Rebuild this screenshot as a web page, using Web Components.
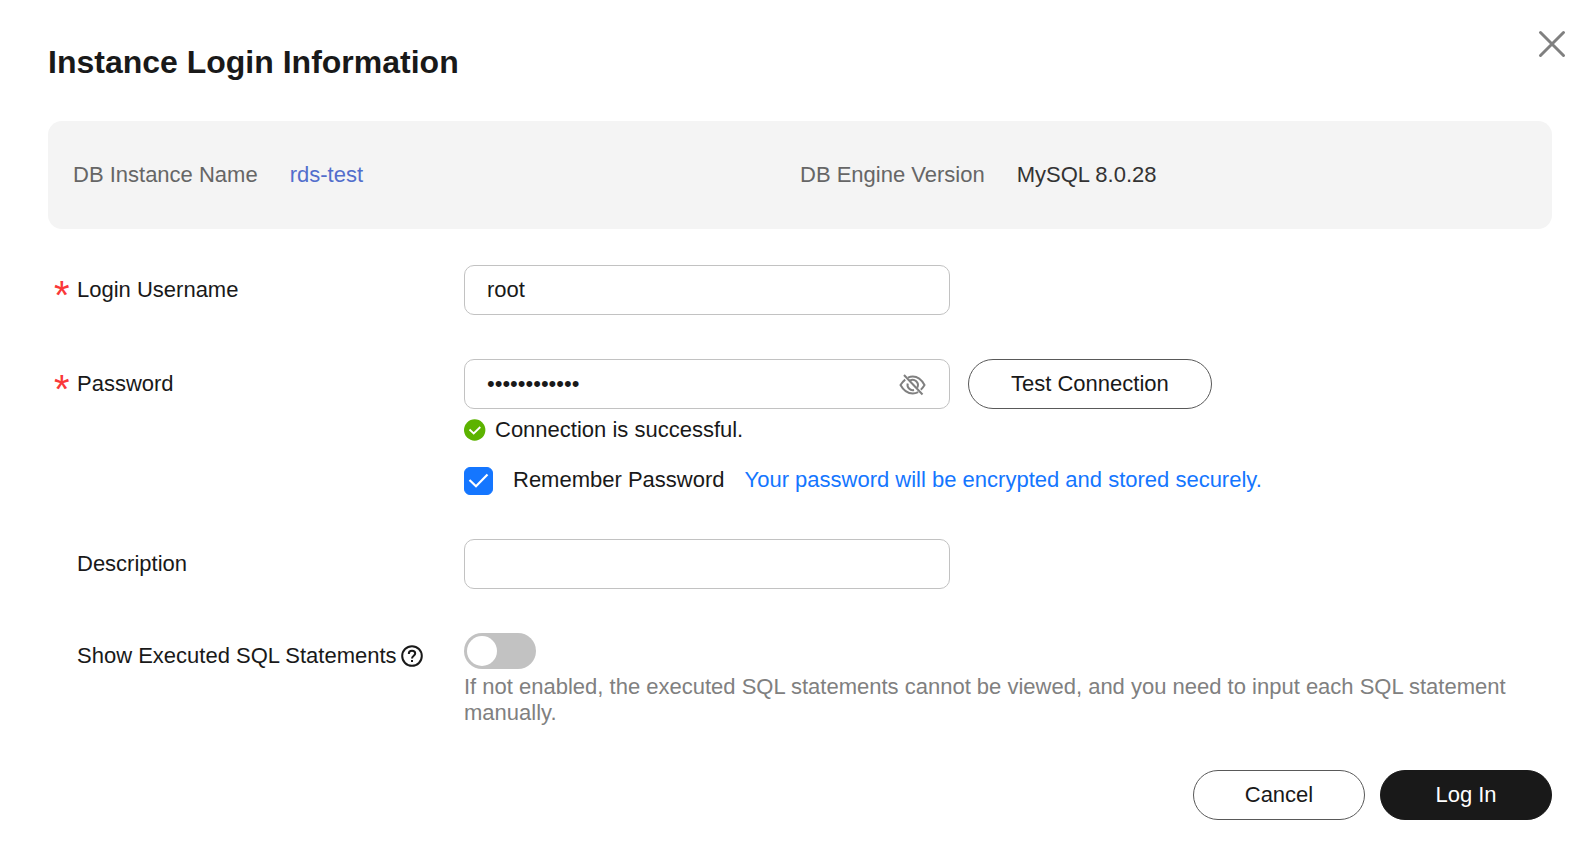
<!DOCTYPE html>
<html lang="en">
<head>
<meta charset="UTF-8">
<meta name="viewport" content="width=device-width, initial-scale=1">
<title>Instance Login Information</title>
<style>
    body {
        margin: 0;
        background: #fff;
        color: #191919;
        font-family: Arial, "Liberation Sans", sans-serif;
        font-size: 22px;
        line-height: 26px;
    }
</style>
</head>
<body>
<login-dialog heading="Instance Login Information">
    <instance-info slot="info">
        <info-item label="DB Instance Name"><a href="#rds-test">rds-test</a></info-item>
        <info-item label="DB Engine Version">MySQL 8.0.28</info-item>
    </instance-info>

    <text-field label="Login Username" value="root" required></text-field>
    <password-field label="Password" value="rootpassword" required>
        <pill-button slot="action">Test Connection</pill-button>
        <status-message slot="extra">Connection is successful.</status-message>
        <check-option slot="extra" label="Remember Password">Your password will be encrypted and stored securely.</check-option>
    </password-field>
    <text-field label="Description"></text-field>
    <toggle-field label="Show Executed SQL Statements">If not enabled, the executed SQL statements cannot be viewed, and you need to input each SQL statement manually.</toggle-field>

    <pill-button slot="footer">Cancel</pill-button>
    <pill-button slot="footer" primary>Log In</pill-button>
</login-dialog>

<script>
const fieldStyles = `
    :host {
        display: grid;
        grid-template-columns: 416px minmax(0, 1fr);
    }
    * { box-sizing: border-box; }
    .label {
        display: flex;
        align-items: center;
        height: 50px;
        padding-left: 29px;
    }
    .label.required { padding-left: 6px; }
    .star {
        width: 23px;
        padding-top: 10px;
        color: #fa3838;
        font-size: 40px;
        line-height: 32px;
    }
    .line {
        display: flex;
        gap: 18px;
    }
    .box {
        display: flex;
        align-items: center;
        width: 486px;
        height: 50px;
        padding: 0 22px;
        border: 1px solid #c2c2c2;
        border-radius: 10px;
        background: #fff;
    }
    .box:focus-within { border-color: #1476ff; }
    .box input {
        flex: 1;
        min-width: 0;
        padding: 0;
        border: 0;
        outline: 0;
        background: none;
        color: inherit;
        font: inherit;
    }
`;

class LoginDialog extends HTMLElement {
    constructor() {
        super();
        this.attachShadow({ mode: "open" });
        this.shadowRoot.innerHTML = `
            <style>
                :host {
                    display: block;
                    padding: 28px 24px 44px 48px;
                }
                header {
                    display: flex;
                    align-items: flex-start;
                    justify-content: space-between;
                }
                h1 {
                    margin: 14px 0 0;
                    font-size: 32px;
                    line-height: 40px;
                }
                .close {
                    display: flex;
                    padding: 2px 0;
                    border: 0;
                    background: none;
                    cursor: pointer;
                }
                main {
                    display: flex;
                    flex-direction: column;
                    gap: 44px;
                    padding-right: 14px;
                }
                .info { margin: 39px 0 -8px; }
                footer {
                    display: flex;
                    justify-content: flex-end;
                    gap: 15px;
                }
            </style>
            <header>
                <h1></h1>
                <button class="close" type="button" aria-label="Close">
                    <svg width="28" height="28" viewBox="0 0 28 28" fill="none" stroke="#808080" stroke-width="3" stroke-linecap="round">
                        <path d="M2.5 2.5 25.5 25.5M25.5 2.5 2.5 25.5"/>
                    </svg>
                </button>
            </header>
            <main>
                <div class="info"><slot name="info"></slot></div>
                <slot></slot>
                <footer><slot name="footer"></slot></footer>
            </main>
        `;
    }

    connectedCallback() {
        this.shadowRoot.querySelector("h1").textContent = this.getAttribute("heading");
    }
}

class InstanceInfo extends HTMLElement {
    constructor() {
        super();
        this.attachShadow({ mode: "open" });
        this.shadowRoot.innerHTML = `
            <style>
                :host {
                    display: grid;
                    grid-template-columns: 1fr 1fr;
                    padding: 41px 25px;
                    border-radius: 14px;
                    background: #f4f4f4;
                }
            </style>
            <slot></slot>
        `;
    }
}

class InfoItem extends HTMLElement {
    constructor() {
        super();
        this.attachShadow({ mode: "open" });
        this.shadowRoot.innerHTML = `
            <style>
                :host {
                    display: flex;
                    gap: 32px;
                    color: #333;
                }
                .name { color: #666; }
                ::slotted(a) {
                    color: #526ecc;
                    text-decoration: none;
                }
            </style>
            <span class="name"></span>
            <span><slot></slot></span>
        `;
    }

    connectedCallback() {
        this.shadowRoot.querySelector(".name").textContent = this.getAttribute("label");
    }
}

class TextField extends HTMLElement {
    constructor() {
        super();
        this.attachShadow({ mode: "open" });
        this.shadowRoot.innerHTML = `
            <style>${fieldStyles}</style>
            <label class="label" for="input"><span class="text"></span></label>
            <div class="box"><input id="input" type="text"></div>
        `;
    }

    connectedCallback() {
        setupField(this);
    }
}

class PasswordField extends HTMLElement {
    constructor() {
        super();
        this.attachShadow({ mode: "open" });
        this.shadowRoot.innerHTML = `
            <style>
                ${fieldStyles}
                .eye {
                    display: flex;
                    padding: 1px 0 0;
                    border: 0;
                    background: none;
                    cursor: pointer;
                }
            </style>
            <label class="label" for="input"><span class="text"></span></label>
            <div>
                <div class="line">
                    <div class="box">
                        <input id="input" type="password">
                        <button class="eye" type="button" aria-label="Show password">
                            <svg width="28" height="22" viewBox="0 0 28 22" fill="none" stroke="#808080" stroke-width="2">
                                <path d="M9 3.600C10.500 2.900 12.200 2.500 13.800 2.500C18.800 2.500 22.500 5.500 25.500 11C24.500 12.800 23.300 14.400 21.800 15.700M6.200 5.600C4.500 6.900 3 8.800 1.500 11C4.500 16.500 8.700 19.500 13.800 19.500C15.800 19.500 17.600 19 19.200 18.200"/>
                                <path d="M10.800 6.600A5.300 5.300 0 0 1 18.200 13.700M8.700 9.500A5.300 5.300 0 0 0 15 16"/>
                                <path d="M5 1 23.500 20.500"/>
                            </svg>
                        </button>
                    </div>
                    <slot name="action"></slot>
                </div>
                <slot name="extra"></slot>
            </div>
        `;
    }

    connectedCallback() {
        setupField(this);
        const input = this.shadowRoot.getElementById("input");
        const eye = this.shadowRoot.querySelector(".eye");
        eye.addEventListener("click", () => {
            input.type = input.type === "password" ? "text" : "password";
        });
    }
}

class ToggleField extends HTMLElement {
    constructor() {
        super();
        this.attachShadow({ mode: "open" });
        this.shadowRoot.innerHTML = `
            <style>
                ${fieldStyles}
                .label {
                    gap: 4px;
                    height: 46px;
                }
                input {
                    display: block;
                    appearance: none;
                    width: 72px;
                    height: 36px;
                    margin: 0 0 5px;
                    padding: 3px;
                    border-radius: 18px;
                    background: #c2c2c2;
                    cursor: pointer;
                }
                input::before {
                    content: "";
                    display: block;
                    width: 30px;
                    height: 30px;
                    border-radius: 50%;
                    background: #fff;
                }
                input:checked { background: #1476ff; }
                input:checked::before { margin-left: auto; }
                p {
                    margin: 0;
                    color: #808080;
                }
            </style>
            <label class="label" for="input">
                <span class="text"></span>
                <svg width="22" height="22" viewBox="0 0 22 22" fill="none" stroke="#191919" stroke-width="2">
                    <circle cx="11" cy="11" r="9.800"/>
                    <path d="M7.800 8.900C7.800 7 9.100 5.800 11 5.800C12.900 5.800 14.200 6.900 14.200 8.500C14.200 10.600 11 10.800 11 13.400"/>
                    <path d="M11 15V17"/>
                </svg>
            </label>
            <div>
                <input id="input" type="checkbox" role="switch">
                <p><slot></slot></p>
            </div>
        `;
    }

    connectedCallback() {
        setupField(this);
    }
}

// Fills in the label, the required mark and the value of a form row
function setupField(field) {
    const root = field.shadowRoot;
    const label = root.querySelector(".label");
    root.querySelector(".text").textContent = field.getAttribute("label");

    if (field.hasAttribute("required") && !root.querySelector(".star")) {
        label.classList.add("required");
        label.insertAdjacentHTML("afterbegin", `<span class="star">*</span>`);
    }
    if (field.hasAttribute("value")) {
        root.getElementById("input").value = field.getAttribute("value");
    }
}

class StatusMessage extends HTMLElement {
    constructor() {
        super();
        this.attachShadow({ mode: "open" });
        this.shadowRoot.innerHTML = `
            <style>
                :host {
                    display: flex;
                    align-items: center;
                    gap: 9px;
                    height: 30px;
                    margin-top: 6px;
                }
            </style>
            <svg width="22" height="22" viewBox="0 0 22 22" fill="none">
                <circle cx="10.700" cy="11" r="10.700" fill="#5cb300"/>
                <path d="M5.500 10.500 9.700 14.500 16.300 8" stroke="#fff" stroke-width="1.800"/>
            </svg>
            <span><slot></slot></span>
        `;
    }
}

class CheckOption extends HTMLElement {
    constructor() {
        super();
        this.attachShadow({ mode: "open" });
        this.shadowRoot.innerHTML = `
            <style>
                :host {
                    display: flex;
                    align-items: flex-end;
                    margin-top: 22px;
                }
                label { margin: 0 20px 2px 20px; }
                .tip {
                    margin-bottom: 2px;
                    color: #1476ff;
                }
                .check { display: grid; }
                .check > * { grid-area: 1 / 1; }
                input {
                    appearance: none;
                    width: 29px;
                    height: 28px;
                    margin: 0;
                    border: 1px solid #c2c2c2;
                    border-radius: 6px;
                }
                input:checked {
                    border-color: #1476ff;
                    background: #1476ff;
                }
                svg { pointer-events: none; }
                input:not(:checked) + svg { visibility: hidden; }
            </style>
            <span class="check">
                <input id="input" type="checkbox" checked>
                <svg width="29" height="28" viewBox="0 0 29 28" fill="none" stroke="#fff" stroke-width="2.200">
                    <path d="M5.500 13 12 19.200 23.500 7.500"/>
                </svg>
            </span>
            <label for="input"></label>
            <span class="tip"><slot></slot></span>
        `;
    }

    connectedCallback() {
        this.shadowRoot.querySelector("label").textContent = this.getAttribute("label");
    }
}

class PillButton extends HTMLElement {
    constructor() {
        super();
        this.attachShadow({ mode: "open" });
        this.shadowRoot.innerHTML = `
            <style>
                :host { display: block; }
                button {
                    box-sizing: border-box;
                    min-width: 172px;
                    height: 50px;
                    padding: 0 42px;
                    border: 1px solid #595959;
                    border-radius: 25px;
                    background: #fff;
                    color: #191919;
                    font: inherit;
                    cursor: pointer;
                }
                :host([primary]) button {
                    border-color: #191919;
                    background: #191919;
                    color: #fff;
                }
            </style>
            <button type="button"><slot></slot></button>
        `;
    }
}

customElements.define("login-dialog", LoginDialog);
customElements.define("instance-info", InstanceInfo);
customElements.define("info-item", InfoItem);
customElements.define("text-field", TextField);
customElements.define("password-field", PasswordField);
customElements.define("toggle-field", ToggleField);
customElements.define("status-message", StatusMessage);
customElements.define("check-option", CheckOption);
customElements.define("pill-button", PillButton);
</script>
</body>
</html>
